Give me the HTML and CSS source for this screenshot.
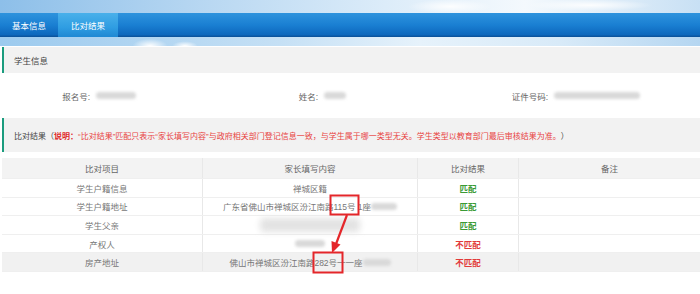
FILE: index.html
```html
<!DOCTYPE html>
<html>
<head>
    <title>比对结果</title>
    <link rel="stylesheet" href="styles.css">
</head>
<body>
    <div class="sky sky-top"></div>
    <div class="tabs">
        <a class="tab">基本信息</a>
        <a class="tab active">比对结果</a>
    </div>
    <div class="sky sky-bottom"></div>

    <div class="content">
        <div class="section-title">学生信息</div>

        <div class="info-row">
            <span class="label">报名号:</span>
            <span class="value"><i class="blur" style="width: 40px;"></i></span>
            <span class="label">姓名:</span>
            <span class="value"><i class="blur" style="width: 22px;"></i></span>
            <span class="label">证件号码:</span>
            <span class="value"><i class="blur" style="width: 86px;"></i></span>
        </div>

        <div class="section-title tall">
            比对结果（<b class="warn">说明：</b><span class="note">“比对结果”匹配只表示“家长填写内容”与政府相关部门登记信息一致，与学生属于哪一类型无关。学生类型以教育部门最后审核结果为准。</span>）
        </div>

        <div class="compare">
            <div class="row head">
                <div class="cell">比对项目</div>
                <div class="cell">家长填写内容</div>
                <div class="cell">比对结果</div>
                <div class="cell">备注</div>
            </div>
            <div class="row">
                <div class="cell">学生户籍信息</div>
                <div class="cell">禅城区籍</div>
                <div class="cell ok">匹配</div>
                <div class="cell"></div>
            </div>
            <div class="row">
                <div class="cell">学生户籍地址</div>
                <div class="cell">广东省佛山市禅城区汾江南路115号 1座<i class="blur" style="width: 26px;"></i></div>
                <div class="cell ok">匹配</div>
                <div class="cell"></div>
            </div>
            <div class="row">
                <div class="cell">学生父亲</div>
                <div class="cell"><i class="blur big" style="width: 100px;"></i></div>
                <div class="cell ok">匹配</div>
                <div class="cell"></div>
            </div>
            <div class="row">
                <div class="cell">产权人</div>
                <div class="cell"><i class="blur" style="width: 30px;"></i></div>
                <div class="cell bad">不匹配</div>
                <div class="cell"></div>
            </div>
            <div class="row hover">
                <div class="cell">房产地址</div>
                <div class="cell">佛山市禅城区汾江南路282号一一座<i class="blur" style="width: 28px;"></i></div>
                <div class="cell bad">不匹配</div>
                <div class="cell"></div>
            </div>
        </div>
    </div>

    <!-- red annotation drawn over the table -->
    <svg class="annot" width="700" height="294" viewBox="0 0 700 294">
        <rect x="330.5" y="195.5" width="28" height="19" fill="none" stroke="#e4262a" stroke-width="2"/>
        <rect x="313.5" y="252.5" width="29" height="20" fill="none" stroke="#e4262a" stroke-width="2"/>
        <line x1="347" y1="215" x2="336" y2="244" stroke="#e4262a" stroke-width="2.2"/>
        <polygon points="332,253 331.5,241 340.5,244.5" fill="#e4262a"/>
    </svg>
</body>
</html>
```

FILE: styles.css
```css
* {
    box-sizing: border-box;
}

body {
    margin: 0;
    position: relative;
    width: 700px;
    height: 294px;
    overflow: hidden;
    background: #fff;
    font-family: "Liberation Sans", "Noto Sans CJK SC", sans-serif;
    font-size: 8.5px;
    color: #555;
}

.sky {
    background:
        radial-gradient(ellipse 60px 10px at 450px 50%, rgba(255,255,255,0.9), rgba(255,255,255,0) 70%),
        radial-gradient(ellipse 90px 8px at 590px 40%, rgba(255,255,255,0.9), rgba(255,255,255,0) 70%),
        linear-gradient(to right, #8dbfe9 0%, #b9d8f2 30%, #dcecf9 55%, #f4f9fd 75%, #c8e0f4 100%);
}

.sky-top {
    height: 13px;
}

.sky-bottom {
    height: 9px;
    background:
        radial-gradient(ellipse 22px 9px at 150px 100%, #ffffff, rgba(255,255,255,0) 80%),
        radial-gradient(ellipse 16px 6px at 185px 100%, #ffffff, rgba(255,255,255,0) 80%),
        linear-gradient(to right, #9ccaee 0%, #c5e0f5 40%, #e6f2fb 60%, #d8eaf8 80%, #b5d6f1 100%);
}

.tabs {
    display: flex;
    height: 24px;
    background: linear-gradient(to bottom, #2e93dd 0%, #1a7fd2 50%, #0d68bd 90%, #0a4f96 100%);
}

.tab {
    display: flex;
    align-items: center;
    padding: 0 12px;
    color: #fff;
    font-size: 8.5px;
}

.tab.active {
    padding: 0 13px;
    background: linear-gradient(to bottom, #49b0ea 0%, #2f9de2 60%, #1f88d3 100%);
}

.content {
    padding: 1px 0 0 2px;
}

.section-title {
    display: flex;
    align-items: center;
    height: 26px;
    padding-left: 10px;
    background: #f2f2f2;
    border-left: 2px solid #1b9c7e;
    color: #444;
    font-size: 8.5px;
}

.section-title.tall {
    height: 34px;
    font-size: 8px;
}

.warn {
    color: #e02a2a;
}

.note {
    color: #e84242;
}

.info-row {
    display: grid;
    grid-template-columns: 88px 160px 68px 147px 83px 1fr;
    align-items: center;
    height: 45px;
    color: #666;
}

.label {
    text-align: right;
}

.value {
    padding-left: 6px;
    display: flex;
    align-items: center;
}

.blur {
    display: inline-block;
    height: 7px;
    border-radius: 4px;
    background: #d9d9d9;
    filter: blur(1.5px);
    vertical-align: middle;
}

.blur.big {
    height: 14px;
    background: #e3e3e3;
    filter: blur(3px);
}

.compare {
    margin-top: 6px;
}

.row {
    display: grid;
    grid-template-columns: 201px 215px 101px 1fr;
    height: 18.6px;
    border-bottom: 1px solid #efefef;
    color: #777;
}

.row.head {
    height: 21px;
    background: #f3f3f3;
    color: #666;
}

.row.hover {
    background: #f1f1f1;
}

.cell {
    display: flex;
    align-items: center;
    justify-content: center;
    border-right: 1px solid #e8e8e8;
    white-space: nowrap;
}

.cell:last-child {
    border-right: none;
}

.ok {
    color: #3a9a35;
    font-weight: bold;
}

.bad {
    color: #e23b3b;
    font-weight: bold;
}

.annot {
    position: absolute;
    top: 0;
    left: 0;
    pointer-events: none;
}
```
